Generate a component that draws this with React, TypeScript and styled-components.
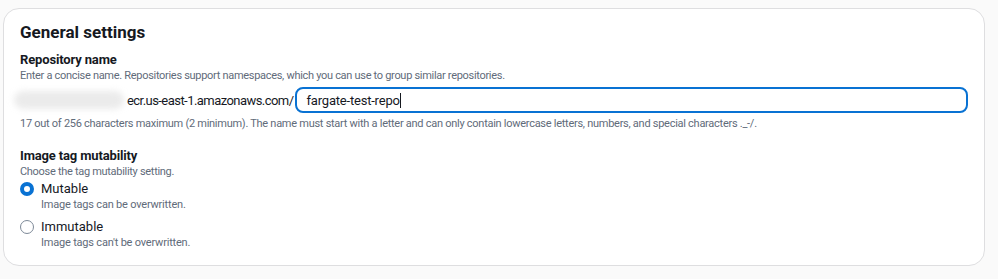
import styled, { createGlobalStyle } from 'styled-components';

const GlobalStyle = createGlobalStyle`
	html, body {
		margin: 0;
		padding: 0;
		background: #fafafa;
	}
	body {
		font-family: Roboto, 'Open Sans', 'Liberation Sans', sans-serif;
		color: #16191f;
	}
`;

const options = [
	{ label: 'Mutable', hint: 'Image tags can be overwritten.', checked: true },
	{ label: 'Immutable', hint: "Image tags can't be overwritten.", checked: false },
];

const App = () => {
	return (
		<Page>
			<GlobalStyle />
			<Card>
				<Title>General settings</Title>

				<Field>
					<Label>Repository name</Label>
					<Hint>
						Enter a concise name. Repositories support namespaces, which you
						can use to group similar repositories.
					</Hint>
					<InputRow>
						<Redacted />
						<Prefix>ecr.us-east-1.amazonaws.com/</Prefix>
						<TextBox>
							fargate-test-repo
							<Caret />
						</TextBox>
					</InputRow>
					<Constraint>
						17 out of 256 characters maximum (2 minimum). The name must start
						with a letter and can only contain lowercase letters, numbers, and
						special characters ._-/.
					</Constraint>
				</Field>

				<Field>
					<Label>Image tag mutability</Label>
					<Hint>Choose the tag mutability setting.</Hint>
					<RadioGroup>
						{options.map((opt) => (
							<RadioItem key={opt.label}>
								<RadioDot $checked={opt.checked} />
								<div>
									<RadioLabel>{opt.label}</RadioLabel>
									<RadioHint>{opt.hint}</RadioHint>
								</div>
							</RadioItem>
						))}
					</RadioGroup>
				</Field>
			</Card>
		</Page>
	);
};

const Page = styled.div`
	padding: 8px 13px 14px 3px;
`;

const Card = styled.div`
	background: #fff;
	border: 1px solid #dedee0;
	border-radius: 16px;
	padding: 12px 16px 15px 16px;
`;

const Title = styled.h2`
	margin: 0 0 9px;
	font-size: 17px;
	font-weight: 700;
	line-height: 22px;
	color: #16191f;
`;

const Field = styled.div`
	margin-bottom: 17px;

	&:last-child {
		margin-bottom: 0;
	}
`;

const Label = styled.div`
	font-size: 13px;
	font-weight: 700;
	line-height: 16px;
	letter-spacing: -0.15px;
`;

const Hint = styled.div`
	font-size: 11px;
	line-height: 15px;
	letter-spacing: -0.3px;
	color: #5f6b7a;
`;

const InputRow = styled.div`
	display: flex;
	align-items: center;
	margin-top: 4px;
	height: 26px;
`;

const Redacted = styled.div`
	width: 110px;
	height: 18px;
	margin-left: -6px;
	margin-right: 3px;
	border-radius: 9px;
	background: #ebebeb;
	filter: blur(3px);
`;

const Prefix = styled.span`
	font-size: 13px;
	letter-spacing: -0.55px;
	color: #16191f;
	margin-right: 1px;
`;

const TextBox = styled.div`
	flex: 1;
	height: 22px;
	display: flex;
	align-items: center;
	padding-left: 10px;
	border: 2px solid #0972d3;
	border-radius: 8px;
	font-size: 13px;
	letter-spacing: -0.2px;
	color: #16191f;
`;

const Caret = styled.span`
	display: inline-block;
	width: 1px;
	height: 15px;
	background: #16191f;
`;

const Constraint = styled.div`
	margin-top: 3px;
	font-size: 11px;
	line-height: 15px;
	letter-spacing: -0.27px;
	color: #5f6b7a;
`;

const RadioGroup = styled.div`
	display: flex;
	flex-direction: column;
	gap: 7px;
	margin-top: 2px;
`;

const RadioItem = styled.div`
	display: flex;
	align-items: flex-start;
	gap: 7px;
`;

const RadioDot = styled.span<{ $checked: boolean }>`
	box-sizing: border-box;
	width: 14px;
	height: 14px;
	margin-top: 1px;
	border-radius: 50%;
	background: #fff;
	border: ${(p) => (p.$checked ? '4px solid #0972d3' : '1px solid #7d8998')};
`;

const RadioLabel = styled.div`
	font-size: 13px;
	line-height: 16px;
	color: #16191f;
`;

const RadioHint = styled.div`
	font-size: 11px;
	line-height: 15px;
	letter-spacing: -0.2px;
	color: #5f6b7a;
`;

export default App;
